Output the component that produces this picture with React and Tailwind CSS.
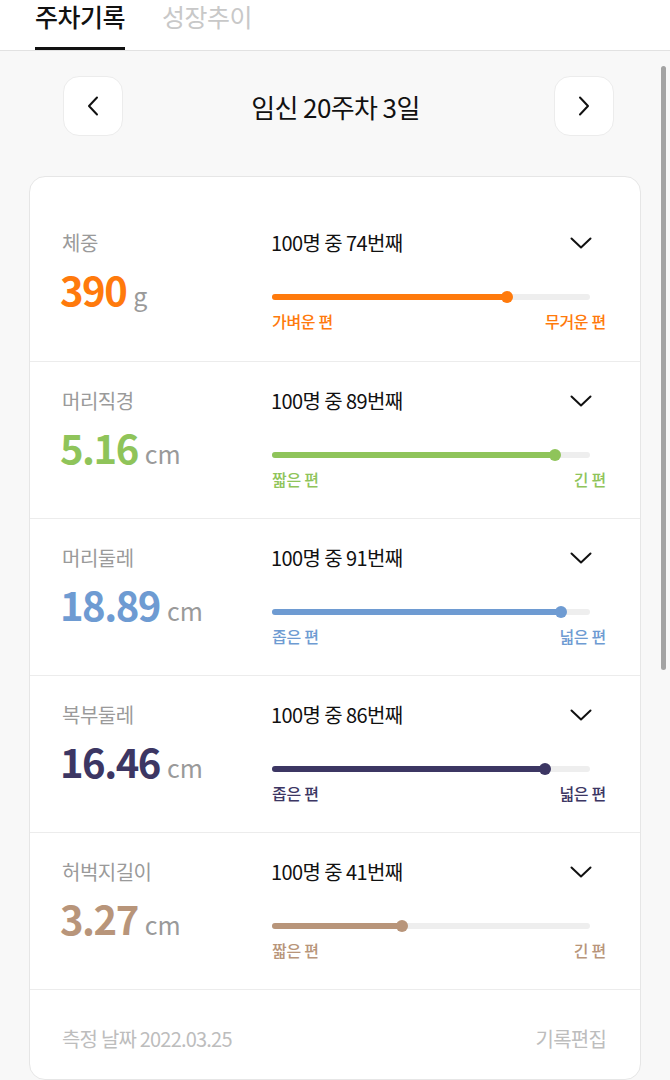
import React from 'react';

const rows = [
  { label: '체중', value: '390', unit: 'g', rank: 74, color: '#ff7a0c', low: '가벼운 편', high: '무거운 편' },
  { label: '머리직경', value: '5.16', unit: 'cm', rank: 89, color: '#8fc45a', low: '짧은 편', high: '긴 편' },
  { label: '머리둘레', value: '18.89', unit: 'cm', rank: 91, color: '#6e9bd2', low: '좁은 편', high: '넓은 편' },
  { label: '복부둘레', value: '16.46', unit: 'cm', rank: 86, color: '#3c3663', low: '좁은 편', high: '넓은 편' },
  { label: '허벅지길이', value: '3.27', unit: 'cm', rank: 41, color: '#b8957a', low: '짧은 편', high: '긴 편' },
];

const ChevronDown = () => (
  <svg width="22" height="12" viewBox="0 0 22 12" fill="none">
    <path d="M1.5 1.5 L11 10.5 L20.5 1.5" stroke="#111" strokeWidth="2" strokeLinecap="round" strokeLinejoin="round" />
  </svg>
);

const Arrow = ({ dir }) => (
  <svg width="12" height="20" viewBox="0 0 12 20" fill="none">
    <path
      d={dir === 'left' ? 'M10 1.5 L2 10 L10 18.5' : 'M2 1.5 L10 10 L2 18.5'}
      stroke="#111"
      strokeWidth="2"
      strokeLinecap="round"
      strokeLinejoin="round"
    />
  </svg>
);

const MeasureRow = ({ item, first }) => (
  <div className={`flex pl-[32px] pr-[34px] pt-[26px] h-[157px] ${first ? '' : 'border-t border-[#ececec]'}`}>
    {/* left: label + value */}
    <div className="w-[210px] shrink-0">
      <p className="text-[20px] leading-[26px] text-[#9a9a9a] tracking-[-0.5px]">{item.label}</p>
      <p className="mt-[9px] flex items-baseline leading-[48px]">
        <span className="text-[40px] font-bold tracking-[-1.5px] -ml-[2px]" style={{ color: item.color }}>{item.value}</span>
        <span className="ml-[7px] text-[25px] text-[#9a9a9a]">{item.unit}</span>
      </p>
    </div>

    {/* right: rank + bar */}
    <div className="flex-1">
      <div className="flex items-center justify-between h-[26px]">
        <p className="-ml-[1px] text-[20px] leading-[26px] text-[#111] tracking-[-0.6px]">100명 중 {item.rank}번째</p>
        <div className="mr-[14px]">
          <ChevronDown />
        </div>
      </div>
      <div className="relative mt-[38px] mr-[16px] h-[6px] rounded-full bg-[#eeeeee]">
        <div className="absolute left-0 top-0 h-[6px] rounded-full" style={{ width: `${item.rank}%`, background: item.color }} />
        <div
          className="absolute top-1/2 w-[12px] h-[12px] -translate-x-1/2 -translate-y-1/2 rounded-full"
          style={{ left: `${item.rank}%`, background: item.color }}
        />
      </div>
      <div className="mt-[10px] flex justify-between text-[16px] leading-[22px] font-medium tracking-[-0.3px]" style={{ color: item.color }}>
        <span>{item.low}</span>
        <span>{item.high}</span>
      </div>
    </div>
  </div>
);

export default function App() {
  return (
    <div
      className="relative min-h-screen bg-[#f8f8f8] overflow-hidden"
      style={{ fontFamily: '"Noto Sans CJK KR", "Noto Sans", sans-serif' }}
    >
      {/* tabs */}
      <div className="flex h-[51px] items-start gap-[37px] bg-white pl-[35px] border-b border-[#e2e2e2]">
        <div className="flex h-full flex-col justify-between pt-[2px]">
          <span className="text-[25px] leading-[28px] font-medium text-[#111] tracking-[-0.5px]">주차기록</span>
          <span className="block h-[3px] w-full bg-[#111]" />
        </div>
        <span className="pt-[2px] text-[25px] leading-[28px] text-[#c8c8c8] tracking-[-0.5px]">성장추이</span>
      </div>

      {/* week nav */}
      <div className="flex items-center justify-between pl-[63px] pr-[56px] pt-[25px]">
        <button className="flex h-[60px] w-[60px] items-center justify-center rounded-[16px] border border-[#ececec] bg-white">
          <Arrow dir="left" />
        </button>
        <p className="-ml-[6px] text-[26px] text-[#111] tracking-[-0.6px]">임신 20주차 3일</p>
        <button className="flex h-[60px] w-[60px] items-center justify-center rounded-[16px] border border-[#ececec] bg-white">
          <Arrow dir="right" />
        </button>
      </div>

      {/* records card */}
      <div className="mx-[29px] mt-[40px] rounded-[16px] border border-[#e6e6e6] bg-white pt-[27px]">
        {rows.map((item, i) => (
          <MeasureRow key={item.label} item={item} first={i === 0} />
        ))}
        <div className="flex justify-between border-t border-[#ececec] pl-[32px] pr-[34px] pt-[35px] h-[90px] text-[20px] leading-[28px] text-[#bdbdbd] tracking-[-0.8px]">
          <span>측정 날짜 2022.03.25</span>
          <span>기록편집</span>
        </div>
      </div>

      {/* scrollbar */}
      <div className="absolute right-[4px] top-[66px] h-[604px] w-[5px] rounded-full bg-[#a3a3a3]" />
    </div>
  );
}
